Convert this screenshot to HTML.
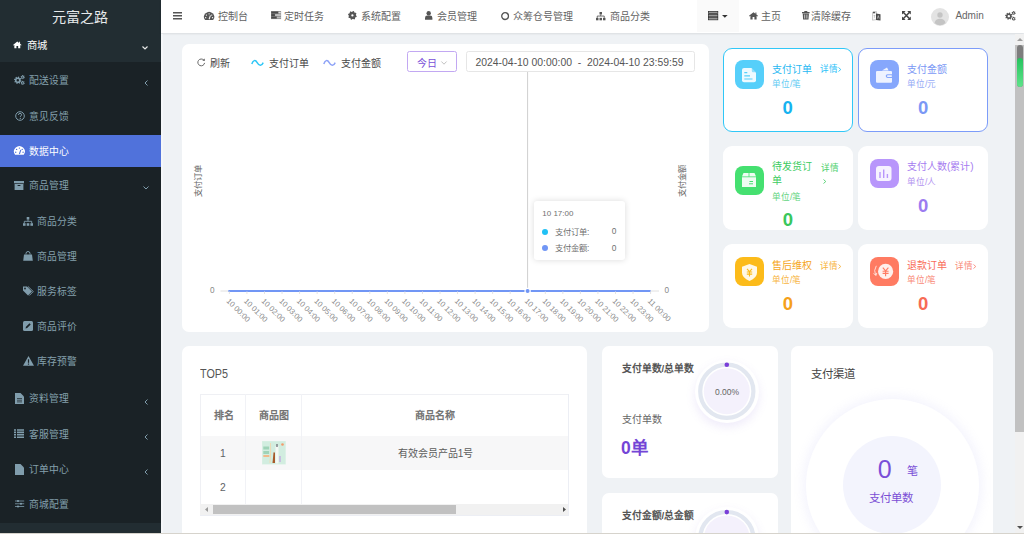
<!DOCTYPE html>
<html lang="zh-CN">
<head>
<meta charset="utf-8">
<style>
*{margin:0;padding:0;box-sizing:border-box}
html,body{width:1024px;height:534px;overflow:hidden;background:#eff2f5;font-family:"Liberation Sans",sans-serif}
.a{position:absolute}
.t{position:absolute;white-space:nowrap}
svg.i{position:absolute;display:block;overflow:visible}
.si{color:#84a0ac;font-size:9.8px;line-height:14px}
.hi{color:#626262;font-size:10px;line-height:14px}
.card{position:absolute;background:#fff;border-radius:7px}
.sc{position:absolute;background:#fff;border-radius:9px}
.ib{position:absolute;width:29px;height:29px;border-radius:8px}
.tt{font-size:10px;line-height:14px}
.un{font-size:8.6px;line-height:10px}
.dt{font-size:8.6px;line-height:10px}
.num{font-size:18.5px;line-height:18px;font-weight:bold}
</style>
</head>
<body>
<!-- SIDEBAR -->
<div class="a" style="left:0;top:0;width:161px;height:534px;background:#1a2226"></div>
<div class="a" style="left:0;top:0;width:161px;height:61.5px;background:#222d32"></div>
<div class="a" style="left:0;top:523px;width:161px;height:11px;background:#222d32"></div>
<div class="t" style="left:51.6px;top:8px;font-size:14.1px;line-height:18px;color:#e6e9eb">元富之路</div>
<svg class="i" style="left:13.2px;top:41px" width="8.6" height="7.6" viewBox="0 0 9 7.4"><path d="M4.5 0.3 L0 3.8 L0.6 4.4 L1.4 3.8 V7.4 H3.6 V5 H5.4 V7.4 H7.6 V3.8 L8.4 4.4 L9 3.8 L7.4 2.5 V0.6 H6.4 V1.7 Z" fill="#fff"/></svg>
<div class="t" style="left:26.8px;top:38.6px;font-size:10.3px;line-height:14px;color:#fff;font-weight:500">商城</div>
<svg class="i" style="left:142.3px;top:45.5px" width="6" height="4" viewBox="0 0 6 4"><path d="M0.5 0.5 L3 3 L5.5 0.5" stroke="#e8e8e8" stroke-width="1.2" fill="none"/></svg>
<div class="a" style="left:0;top:134.5px;width:161px;height:32px;background:#5072db"></div>
<!-- sidebar icons -->
<svg class="i" style="left:14.1px;top:75px" width="10.8" height="10" viewBox="0 0 11.4 10.5"><path d="M7.00 5.50 L7.97 5.97 L7.70 7.03 L6.62 6.97 L6.12 7.62 L6.48 8.64 L5.53 9.20 L4.81 8.39 L4.00 8.50 L3.53 9.47 L2.47 9.20 L2.53 8.12 L1.88 7.62 L0.86 7.98 L0.30 7.03 L1.11 6.31 L1.00 5.50 L0.03 5.03 L0.30 3.97 L1.38 4.03 L1.88 3.38 L1.52 2.36 L2.47 1.80 L3.19 2.61 L4.00 2.50 L4.47 1.53 L5.53 1.80 L5.47 2.88 L6.12 3.38 L7.14 3.02 L7.70 3.97 L6.89 4.69Z M5.30 5.50 A1.3 1.3 0 1 0 2.70 5.50 A1.3 1.3 0 1 0 5.30 5.50Z" fill="#809dac" fill-rule="evenodd"/><path d="M10.80 2.20 L11.37 2.54 L11.11 3.30 L10.44 3.21 L10.00 3.59 L9.99 4.25 L9.20 4.40 L8.95 3.78 L8.40 3.59 L7.82 3.91 L7.29 3.30 L7.71 2.77 L7.60 2.20 L7.03 1.86 L7.29 1.10 L7.96 1.19 L8.40 0.81 L8.41 0.15 L9.20 0.00 L9.45 0.62 L10.00 0.81 L10.58 0.49 L11.11 1.10 L10.69 1.63Z M9.90 2.20 A0.7 0.7 0 1 0 8.50 2.20 A0.7 0.7 0 1 0 9.90 2.20Z" fill="#809dac" fill-rule="evenodd"/><path d="M10.80 8.30 L11.37 8.64 L11.11 9.40 L10.44 9.31 L10.00 9.69 L9.99 10.35 L9.20 10.50 L8.95 9.88 L8.40 9.69 L7.82 10.01 L7.29 9.40 L7.71 8.87 L7.60 8.30 L7.03 7.96 L7.29 7.20 L7.96 7.29 L8.40 6.91 L8.41 6.25 L9.20 6.10 L9.45 6.72 L10.00 6.91 L10.58 6.59 L11.11 7.20 L10.69 7.73Z M9.90 8.30 A0.7 0.7 0 1 0 8.50 8.30 A0.7 0.7 0 1 0 9.90 8.30Z" fill="#809dac" fill-rule="evenodd"/></svg>
<svg class="i" style="left:14.5px;top:111px" width="10" height="10" viewBox="0 0 10 10"><circle cx="5" cy="5" r="4.3" stroke="#809dac" stroke-width="1" fill="none"/><path d="M3.4 3.9 Q3.5 2.4 5 2.4 Q6.6 2.4 6.6 3.8 Q6.6 4.7 5.4 5.2 V6" stroke="#809dac" stroke-width="1" fill="none"/><circle cx="5.3" cy="7.4" r="0.6" fill="#809dac"/></svg>
<svg class="i" style="left:14px;top:146px" width="10.8" height="9" viewBox="0 0 10 8"><path d="M1 8 A5 5 0 1 1 9 8 Z" fill="#fff"/><path d="M5 7.2 L6.3 3.4" stroke="#5072db" stroke-width="1"/><circle cx="5" cy="1.8" r="0.65" fill="#5072db"/><circle cx="2.4" cy="3" r="0.65" fill="#5072db"/><circle cx="7.6" cy="3" r="0.65" fill="#5072db"/><circle cx="1.6" cy="5.6" r="0.65" fill="#5072db"/><circle cx="8.4" cy="5.6" r="0.65" fill="#5072db"/></svg>
<svg class="i" style="left:14px;top:180.5px" width="10" height="9" viewBox="0 0 10 9"><rect x="0" y="0" width="10" height="2.3" fill="#809dac"/><rect x="0.6" y="3" width="8.8" height="6" fill="#809dac"/><rect x="3.6" y="4" width="2.8" height="1" fill="#1a2226"/></svg>
<svg class="i" style="left:22.8px;top:216.5px" width="10" height="9" viewBox="0 0 10 9"><rect x="3.7" y="0" width="2.6" height="2.6" fill="#809dac"/><path d="M5 2.6 V4.3 M1.3 6.2 V4.3 H8.7 V6.2" stroke="#809dac" stroke-width="0.9" fill="none"/><rect x="0" y="6.2" width="2.6" height="2.6" fill="#809dac"/><rect x="3.7" y="6.2" width="2.6" height="2.6" fill="#809dac"/><rect x="7.4" y="6.2" width="2.6" height="2.6" fill="#809dac"/></svg>
<svg class="i" style="left:22.8px;top:250.5px" width="10" height="10" viewBox="0 0 10 10"><path d="M3 3.5 V2.5 Q3 0.5 5 0.5 Q7 0.5 7 2.5 V3.5" stroke="#809dac" stroke-width="1" fill="none"/><path d="M1 3.5 H9 L9.8 9.8 H0.2 Z" fill="#809dac"/></svg>
<svg class="i" style="left:22.8px;top:286px" width="11" height="10" viewBox="0 0 11 10"><path d="M0 0.5 H4 L9 5.5 L5 9.5 L0 4.5 Z" fill="#809dac"/><circle cx="2" cy="2.5" r="0.9" fill="#1a2226"/><path d="M5 0.5 L10.3 5.5 L6.3 9.5" stroke="#809dac" stroke-width="0.9" fill="none"/></svg>
<svg class="i" style="left:23px;top:321px" width="10" height="10" viewBox="0 0 10 10"><rect x="0" y="0" width="10" height="10" rx="1.5" fill="#809dac"/><path d="M2.5 7.5 L3 5.8 L6.5 2.3 L7.7 3.5 L4.2 7 Z" fill="#1a2226"/></svg>
<svg class="i" style="left:22.8px;top:356px" width="11" height="10" viewBox="0 0 11 10"><path d="M5.5 0 L11 9.8 H0 Z" fill="#809dac"/><rect x="4.9" y="3.3" width="1.2" height="3.5" fill="#1a2226"/><rect x="4.9" y="7.5" width="1.2" height="1.2" fill="#1a2226"/></svg>
<svg class="i" style="left:14.5px;top:393px" width="9" height="11" viewBox="0 0 9 11"><path d="M0 0 H5.5 L9 3.5 V11 H0 Z" fill="#809dac"/><path d="M2 5.5 H7 M2 7.2 H7 M2 8.9 H7" stroke="#1a2226" stroke-width="0.7"/></svg>
<svg class="i" style="left:14.3px;top:429px" width="10" height="9" viewBox="0 0 10 9"><path d="M0 1 H2 M0 3.4 H2 M0 5.8 H2 M0 8.2 H2 M3 1 H10 M3 3.4 H10 M3 5.8 H10 M3 8.2 H10" stroke="#809dac" stroke-width="1.6"/></svg>
<svg class="i" style="left:14.5px;top:464px" width="9" height="11" viewBox="0 0 9 11"><path d="M0 0 H5.5 L9 3.5 V11 H0 Z" fill="#809dac"/></svg>
<svg class="i" style="left:14.8px;top:500.3px" width="9.2" height="7.5" viewBox="0 0 9.2 7.5"><path d="M0 1 H9.2 M0 3.75 H9.2 M0 6.5 H9.2" stroke="#809dac" stroke-width="0.8"/><circle cx="3" cy="1" r="1.1" fill="#809dac"/><circle cx="6" cy="3.75" r="1.1" fill="#809dac"/><circle cx="3" cy="6.5" r="1.1" fill="#809dac"/></svg>
<!-- sidebar arrows -->
<svg class="i" style="left:144px;top:80px" width="4" height="6" viewBox="0 0 4 6"><path d="M3.5 0.5 L1 3 L3.5 5.5" stroke="#809dac" stroke-width="1" fill="none"/></svg>
<svg class="i" style="left:143px;top:186px" width="6" height="4" viewBox="0 0 6 4"><path d="M0.5 0.5 L3 3 L5.5 0.5" stroke="#809dac" stroke-width="1" fill="none"/></svg>
<svg class="i" style="left:144px;top:398.5px" width="4" height="6" viewBox="0 0 4 6"><path d="M3.5 0.5 L1 3 L3.5 5.5" stroke="#809dac" stroke-width="1" fill="none"/></svg>
<svg class="i" style="left:144px;top:434px" width="4" height="6" viewBox="0 0 4 6"><path d="M3.5 0.5 L1 3 L3.5 5.5" stroke="#809dac" stroke-width="1" fill="none"/></svg>
<svg class="i" style="left:144px;top:469px" width="4" height="6" viewBox="0 0 4 6"><path d="M3.5 0.5 L1 3 L3.5 5.5" stroke="#809dac" stroke-width="1" fill="none"/></svg>
<div class="t si" style="left:28.5px;top:74.3px">配送设置</div>
<div class="t si" style="left:28.5px;top:109.8px">意见反馈</div>
<div class="t si" style="left:28.5px;top:145.2px;color:#fff">数据中心</div>
<div class="t si" style="left:28.5px;top:179.3px">商品管理</div>
<div class="t si" style="left:37.3px;top:215.2px">商品分类</div>
<div class="t si" style="left:37.3px;top:249.5px">商品管理</div>
<div class="t si" style="left:37.3px;top:284.9px">服务标签</div>
<div class="t si" style="left:37.3px;top:319.8px">商品评价</div>
<div class="t si" style="left:37.3px;top:355.2px">库存预警</div>
<div class="t si" style="left:28.5px;top:392.4px">资料管理</div>
<div class="t si" style="left:28.5px;top:427.9px">客服管理</div>
<div class="t si" style="left:28.5px;top:463px">订单中心</div>
<div class="t si" style="left:28.5px;top:498px">商城配置</div>

<!-- HEADER -->
<div class="a" style="left:161px;top:0;width:863px;height:33px;background:#fff;box-shadow:0 1px 2px rgba(0,0,0,0.09)"></div><div class="a" style="left:161px;top:34px;width:2px;height:499px;background:#f5f7f9"></div>
<div class="a" style="left:697px;top:0;width:42px;height:32px;background:#fafafa"></div>
<svg class="i" style="left:172.5px;top:12px" width="9" height="7.5" viewBox="0 0 9 7.5"><path d="M0 0.8 H9 M0 3.75 H9 M0 6.7 H9" stroke="#555" stroke-width="1.4"/></svg>
<svg class="i" style="left:204.2px;top:11.9px" width="10.2" height="8.1" viewBox="0 0 10 8"><path d="M1 8 A5 5 0 1 1 9 8 Z" fill="#555"/><path d="M5 7.2 L6.3 3.4" stroke="#fff" stroke-width="1"/><circle cx="5" cy="1.8" r="0.65" fill="#fff"/><circle cx="2.4" cy="3" r="0.65" fill="#fff"/><circle cx="7.6" cy="3" r="0.65" fill="#fff"/><circle cx="1.6" cy="5.6" r="0.65" fill="#fff"/><circle cx="8.4" cy="5.6" r="0.65" fill="#fff"/></svg>
<div class="t hi" style="left:217.6px;top:9.7px">控制台</div>
<svg class="i" style="left:270.8px;top:11px" width="10.1" height="8.1" viewBox="0 0 10.1 8.1"><rect x="0" y="0" width="10.1" height="8.1" fill="#888"/><rect x="0.3" y="0.6" width="7" height="1.9" fill="#4a4a4a"/><rect x="0.3" y="3.1" width="3.6" height="1.9" fill="#4a4a4a"/><rect x="0.3" y="5.6" width="5.4" height="1.9" fill="#4a4a4a"/><rect x="7.5" y="0.8" width="2.3" height="1.5" fill="#ddd"/><rect x="4.1" y="3.3" width="5.7" height="1.5" fill="#ccc"/><rect x="5.9" y="5.8" width="3.9" height="1.5" fill="#bbb"/></svg>
<div class="t hi" style="left:284px;top:9.7px">定时任务</div>
<svg class="i" style="left:347.6px;top:11.4px" width="8.8" height="8.8" viewBox="0 0 10 10"><path d="M9.10 5.00 L9.96 5.67 L9.62 6.91 L8.55 7.06 L7.90 7.90 L8.03 8.97 L6.91 9.62 L6.05 8.96 L5.00 9.10 L4.33 9.96 L3.09 9.62 L2.94 8.55 L2.10 7.90 L1.03 8.03 L0.38 6.91 L1.04 6.05 L0.90 5.00 L0.04 4.33 L0.38 3.09 L1.45 2.94 L2.10 2.10 L1.97 1.03 L3.09 0.38 L3.95 1.04 L5.00 0.90 L5.67 0.04 L6.91 0.38 L7.06 1.45 L7.90 2.10 L8.97 1.97 L9.62 3.09 L8.96 3.95Z M6.3 5 A1.3 1.3 0 1 0 3.7 5 A1.3 1.3 0 1 0 6.3 5Z" fill="#555" fill-rule="evenodd"/></svg>
<div class="t hi" style="left:360.7px;top:9.7px">系统配置</div>
<svg class="i" style="left:425px;top:11.2px" width="7.4" height="8.8" viewBox="0 0 7.4 8.8"><circle cx="3.7" cy="2.3" r="2.2" fill="#555"/><path d="M0 8.8 V7 Q0 4.6 2.3 4.6 H5.1 Q7.4 4.6 7.4 7 V8.8 Z" fill="#555"/></svg>
<div class="t hi" style="left:437.2px;top:9.7px">会员管理</div>
<svg class="i" style="left:500.6px;top:11.8px" width="8.2" height="8.2" viewBox="0 0 8.2 8.2"><circle cx="4.1" cy="4.1" r="3.4" stroke="#555" stroke-width="1.3" fill="none"/></svg>
<div class="t hi" style="left:513.2px;top:9.7px">众筹仓号管理</div>
<svg class="i" style="left:595.5px;top:11.8px" width="9.5" height="8.5" viewBox="0 0 10 9"><rect x="3.7" y="0" width="2.6" height="2.6" fill="#555"/><path d="M5 2.6 V4.3 M1.3 6.2 V4.3 H8.7 V6.2" stroke="#555" stroke-width="0.9" fill="none"/><rect x="0" y="6.2" width="2.6" height="2.6" fill="#555"/><rect x="3.7" y="6.2" width="2.6" height="2.6" fill="#555"/><rect x="7.4" y="6.2" width="2.6" height="2.6" fill="#555"/></svg>
<div class="t hi" style="left:609.7px;top:9.7px">商品分类</div>
<svg class="i" style="left:707.8px;top:10.8px" width="10.2" height="9.2" viewBox="0 0 10.2 9.2"><rect x="0.35" y="0.35" width="9.5" height="2.3" fill="#9a9a9a" stroke="#2a2a2a" stroke-width="0.7"/><rect x="0.35" y="3.45" width="9.5" height="2.3" fill="#9a9a9a" stroke="#2a2a2a" stroke-width="0.7"/><rect x="0.35" y="6.55" width="9.5" height="2.3" fill="#9a9a9a" stroke="#2a2a2a" stroke-width="0.7"/></svg>
<svg class="i" style="left:722px;top:15px" width="5.7" height="2.8" viewBox="0 0 5.7 2.8"><path d="M0 0 H5.7 L2.85 2.8 Z" fill="#333"/></svg>
<svg class="i" style="left:749px;top:11.8px" width="9" height="7.4" viewBox="0 0 9 7.4"><path d="M4.5 0.3 L0 3.8 L0.6 4.4 L1.4 3.8 V7.4 H3.6 V5 H5.4 V7.4 H7.6 V3.8 L8.4 4.4 L9 3.8 L7.4 2.5 V0.6 H6.4 V1.7 Z" fill="#555"/></svg>
<div class="t hi" style="left:760.6px;top:9.7px">主页</div>
<svg class="i" style="left:802px;top:11px" width="7.6" height="8.6" viewBox="0 0 7.6 8.6"><rect x="2.3" y="0" width="3" height="1" fill="#555"/><rect x="0" y="1" width="7.6" height="1.3" fill="#555"/><path d="M0.7 2.6 H6.9 L6.5 8.6 H1.1 Z" fill="#555"/><path d="M2.7 3.5 V7.6 M4.9 3.5 V7.6" stroke="#fff" stroke-width="0.7"/></svg>
<div class="t hi" style="left:811.4px;top:9.7px">清除缓存</div>
<svg class="i" style="left:872.3px;top:10.8px" width="9" height="9.8" viewBox="0 0 9 9.8"><path d="M0.5 1.2 L4.5 0.6 V8.6 L0.5 9.2Z" fill="#fafafa" stroke="#aaa" stroke-width="0.6"/><rect x="1" y="0.8" width="2.2" height="1.5" fill="#555"/><path d="M4 2.5 L8.5 3.2 V9.6 L4 8.9Z" fill="#4a4a4a"/><path d="M5.4 7.6 L6.3 4.6 L7.2 7.6" stroke="#ddd" stroke-width="0.6" fill="none"/><path d="M1.6 4.5 H3.3 M2.4 4.5 V6.8" stroke="#999" stroke-width="0.5"/></svg>
<svg class="i" style="left:901.6px;top:10.9px" width="8.8" height="9" viewBox="0 0 8.8 9"><path d="M0 0 H3.6 L0 3.6Z M8.8 0 V3.6 L5.2 0Z M0 9 V5.4 L3.6 9Z M8.8 9 H5.2 L8.8 5.4Z" fill="#444"/><path d="M1 1 L7.8 8 M7.8 1 L1 8" stroke="#444" stroke-width="1.5"/></svg>
<svg class="i" style="left:931px;top:8.1px" width="18" height="18" viewBox="0 0 18 18"><circle cx="9" cy="9" r="9" fill="#e3e3e3"/><circle cx="9" cy="7" r="2.7" fill="#c4c4c4"/><path d="M3.5 15 Q4.5 10.8 9 10.8 Q13.5 10.8 14.5 15 Q12 17.2 9 17.2 Q6 17.2 3.5 15Z" fill="#c4c4c4"/></svg>
<div class="t hi" style="left:955.4px;top:9.3px;color:#666">Admin</div>
<svg class="i" style="left:1004.8px;top:11px" width="10.8" height="9.8" viewBox="0 0 11.4 10.5"><path d="M7.00 5.50 L7.97 5.97 L7.70 7.03 L6.62 6.97 L6.12 7.62 L6.48 8.64 L5.53 9.20 L4.81 8.39 L4.00 8.50 L3.53 9.47 L2.47 9.20 L2.53 8.12 L1.88 7.62 L0.86 7.98 L0.30 7.03 L1.11 6.31 L1.00 5.50 L0.03 5.03 L0.30 3.97 L1.38 4.03 L1.88 3.38 L1.52 2.36 L2.47 1.80 L3.19 2.61 L4.00 2.50 L4.47 1.53 L5.53 1.80 L5.47 2.88 L6.12 3.38 L7.14 3.02 L7.70 3.97 L6.89 4.69Z M5.30 5.50 A1.3 1.3 0 1 0 2.70 5.50 A1.3 1.3 0 1 0 5.30 5.50Z" fill="#555" fill-rule="evenodd"/><path d="M10.80 2.20 L11.37 2.54 L11.11 3.30 L10.44 3.21 L10.00 3.59 L9.99 4.25 L9.20 4.40 L8.95 3.78 L8.40 3.59 L7.82 3.91 L7.29 3.30 L7.71 2.77 L7.60 2.20 L7.03 1.86 L7.29 1.10 L7.96 1.19 L8.40 0.81 L8.41 0.15 L9.20 0.00 L9.45 0.62 L10.00 0.81 L10.58 0.49 L11.11 1.10 L10.69 1.63Z M9.90 2.20 A0.7 0.7 0 1 0 8.50 2.20 A0.7 0.7 0 1 0 9.90 2.20Z" fill="#555" fill-rule="evenodd"/><path d="M10.80 8.30 L11.37 8.64 L11.11 9.40 L10.44 9.31 L10.00 9.69 L9.99 10.35 L9.20 10.50 L8.95 9.88 L8.40 9.69 L7.82 10.01 L7.29 9.40 L7.71 8.87 L7.60 8.30 L7.03 7.96 L7.29 7.20 L7.96 7.29 L8.40 6.91 L8.41 6.25 L9.20 6.10 L9.45 6.72 L10.00 6.91 L10.58 6.59 L11.11 7.20 L10.69 7.73Z M9.90 8.30 A0.7 0.7 0 1 0 8.50 8.30 A0.7 0.7 0 1 0 9.90 8.30Z" fill="#555" fill-rule="evenodd"/></svg>

<!-- CHART CARD -->
<div class="card" style="left:182px;top:44px;width:527px;height:287.5px"></div>
<svg class="i" style="left:197.1px;top:57.8px" width="8.4" height="8.4" viewBox="0 0 8.4 8.4"><path d="M6.9 2.3 A3.4 3.4 0 1 0 7.6 4.9" stroke="#666" stroke-width="1" fill="none"/><path d="M5.3 2.6 L7.9 3.1 L7.7 0.4 Z" fill="#666"/></svg>
<div class="t tt" style="left:209.6px;top:56.5px;color:#484848">刷新</div>
<svg class="i" style="left:250.8px;top:59px" width="13" height="7.5" viewBox="0 0 13 7.5"><path d="M0.8 5 C2 1.2 4.3 0.3 6.2 3.6 C8 6.8 10.6 7.4 12.2 3.6" stroke="#2ec6f6" stroke-width="1.5" fill="none"/></svg>
<div class="t tt" style="left:268.8px;top:56.5px;color:#484848">支付订单</div>
<svg class="i" style="left:322.7px;top:59px" width="13" height="7.5" viewBox="0 0 13 7.5"><path d="M0.8 5 C2 1.2 4.3 0.3 6.2 3.6 C8 6.8 10.6 7.4 12.2 3.6" stroke="#8ea3f7" stroke-width="1.5" fill="none"/></svg>
<div class="t tt" style="left:340.8px;top:56.5px;color:#484848">支付金额</div>
<div class="a" style="left:407.2px;top:51.1px;width:49.4px;height:21px;border:1px solid #c2a8f2;border-radius:2.5px"></div>
<div class="t tt" style="left:416.8px;top:57.1px;color:#7a4fd8">今日</div>
<svg class="i" style="left:441px;top:61px" width="6" height="4" viewBox="0 0 6 4"><path d="M0.4 0.5 L3 3.2 L5.6 0.5" stroke="#bbb" stroke-width="0.9" fill="none"/></svg>
<div class="a" style="left:466.4px;top:51.3px;width:228.6px;height:20.8px;border:1px solid #e6e6e6;border-radius:2.5px"></div>
<div class="t" style="left:475.5px;top:55.9px;font-size:10.4px;line-height:14px;color:#555;word-spacing:0">2024-04-10 00:00:00&nbsp; - &nbsp;2024-04-10 23:59:59</div>

<svg class="i" style="left:0;top:0" width="1024" height="534" viewBox="0 0 1024 534">
<line x1="527.6" y1="72" x2="527.6" y2="291" stroke="#cfcfcf" stroke-width="1"/>
<line x1="220.5" y1="291" x2="659" y2="291" stroke="#e0e0e0" stroke-width="1"/>
<line x1="228.4" y1="291" x2="650.6" y2="291" stroke="#7196f5" stroke-width="2"/>
<line x1="229.40" y1="291.5" x2="229.40" y2="294" stroke="#e3e3e3" stroke-width="1"/>
<line x1="246.95" y1="291.5" x2="246.95" y2="294" stroke="#e3e3e3" stroke-width="1"/>
<line x1="264.50" y1="291.5" x2="264.50" y2="294" stroke="#e3e3e3" stroke-width="1"/>
<line x1="282.05" y1="291.5" x2="282.05" y2="294" stroke="#e3e3e3" stroke-width="1"/>
<line x1="299.60" y1="291.5" x2="299.60" y2="294" stroke="#e3e3e3" stroke-width="1"/>
<line x1="317.15" y1="291.5" x2="317.15" y2="294" stroke="#e3e3e3" stroke-width="1"/>
<line x1="334.70" y1="291.5" x2="334.70" y2="294" stroke="#e3e3e3" stroke-width="1"/>
<line x1="352.25" y1="291.5" x2="352.25" y2="294" stroke="#e3e3e3" stroke-width="1"/>
<line x1="369.80" y1="291.5" x2="369.80" y2="294" stroke="#e3e3e3" stroke-width="1"/>
<line x1="387.35" y1="291.5" x2="387.35" y2="294" stroke="#e3e3e3" stroke-width="1"/>
<line x1="404.90" y1="291.5" x2="404.90" y2="294" stroke="#e3e3e3" stroke-width="1"/>
<line x1="422.45" y1="291.5" x2="422.45" y2="294" stroke="#e3e3e3" stroke-width="1"/>
<line x1="440.00" y1="291.5" x2="440.00" y2="294" stroke="#e3e3e3" stroke-width="1"/>
<line x1="457.55" y1="291.5" x2="457.55" y2="294" stroke="#e3e3e3" stroke-width="1"/>
<line x1="475.10" y1="291.5" x2="475.10" y2="294" stroke="#e3e3e3" stroke-width="1"/>
<line x1="492.65" y1="291.5" x2="492.65" y2="294" stroke="#e3e3e3" stroke-width="1"/>
<line x1="510.20" y1="291.5" x2="510.20" y2="294" stroke="#e3e3e3" stroke-width="1"/>
<line x1="527.75" y1="291.5" x2="527.75" y2="294" stroke="#e3e3e3" stroke-width="1"/>
<line x1="545.30" y1="291.5" x2="545.30" y2="294" stroke="#e3e3e3" stroke-width="1"/>
<line x1="562.85" y1="291.5" x2="562.85" y2="294" stroke="#e3e3e3" stroke-width="1"/>
<line x1="580.40" y1="291.5" x2="580.40" y2="294" stroke="#e3e3e3" stroke-width="1"/>
<line x1="597.95" y1="291.5" x2="597.95" y2="294" stroke="#e3e3e3" stroke-width="1"/>
<line x1="615.50" y1="291.5" x2="615.50" y2="294" stroke="#e3e3e3" stroke-width="1"/>
<line x1="633.05" y1="291.5" x2="633.05" y2="294" stroke="#e3e3e3" stroke-width="1"/>
<line x1="650.60" y1="291.5" x2="650.60" y2="294" stroke="#e3e3e3" stroke-width="1"/>
<g font-family="Liberation Sans" font-size="7.6" fill="#8a8a8a"><text x="226.00" y="301.50" transform="rotate(45 226.00 301.50)">10 00:00</text>
<text x="243.55" y="301.50" transform="rotate(45 243.55 301.50)">10 01:00</text>
<text x="261.10" y="301.50" transform="rotate(45 261.10 301.50)">10 02:00</text>
<text x="278.65" y="301.50" transform="rotate(45 278.65 301.50)">10 03:00</text>
<text x="296.20" y="301.50" transform="rotate(45 296.20 301.50)">10 04:00</text>
<text x="313.75" y="301.50" transform="rotate(45 313.75 301.50)">10 05:00</text>
<text x="331.30" y="301.50" transform="rotate(45 331.30 301.50)">10 06:00</text>
<text x="348.85" y="301.50" transform="rotate(45 348.85 301.50)">10 07:00</text>
<text x="366.40" y="301.50" transform="rotate(45 366.40 301.50)">10 08:00</text>
<text x="383.95" y="301.50" transform="rotate(45 383.95 301.50)">10 09:00</text>
<text x="401.50" y="301.50" transform="rotate(45 401.50 301.50)">10 10:00</text>
<text x="419.05" y="301.50" transform="rotate(45 419.05 301.50)">10 11:00</text>
<text x="436.60" y="301.50" transform="rotate(45 436.60 301.50)">10 12:00</text>
<text x="454.15" y="301.50" transform="rotate(45 454.15 301.50)">10 13:00</text>
<text x="471.70" y="301.50" transform="rotate(45 471.70 301.50)">10 14:00</text>
<text x="489.25" y="301.50" transform="rotate(45 489.25 301.50)">10 15:00</text>
<text x="506.80" y="301.50" transform="rotate(45 506.80 301.50)">10 16:00</text>
<text x="524.35" y="301.50" transform="rotate(45 524.35 301.50)">10 17:00</text>
<text x="541.90" y="301.50" transform="rotate(45 541.90 301.50)">10 18:00</text>
<text x="559.45" y="301.50" transform="rotate(45 559.45 301.50)">10 19:00</text>
<text x="577.00" y="301.50" transform="rotate(45 577.00 301.50)">10 20:00</text>
<text x="594.55" y="301.50" transform="rotate(45 594.55 301.50)">10 21:00</text>
<text x="612.10" y="301.50" transform="rotate(45 612.10 301.50)">10 22:00</text>
<text x="629.65" y="301.50" transform="rotate(45 629.65 301.50)">10 23:00</text>
<text x="647.20" y="301.50" transform="rotate(45 647.20 301.50)">11 00:00</text></g>
<circle cx="527.6" cy="291" r="2.6" fill="#7196f5" stroke="#fff" stroke-width="1.2"/>
<text x="210" y="292.7" font-family="Liberation Sans" font-size="8.2" fill="#888">0</text>
<text x="664.5" y="292.7" font-family="Liberation Sans" font-size="8.2" fill="#888">0</text>
</svg>
<div class="t" style="left:180.7px;top:176.3px;width:34px;height:10px;font-size:8.3px;line-height:10px;color:#666;transform:rotate(-90deg);text-align:center">支付订单</div>
<div class="t" style="left:664.9px;top:176.3px;width:34px;height:10px;font-size:8.3px;line-height:10px;color:#666;transform:rotate(-90deg);text-align:center">支付金额</div>
<!-- tooltip -->
<div class="a" style="left:533.5px;top:201.2px;width:91px;height:58.4px;background:#fff;border-radius:3px;box-shadow:0 0 6px rgba(0,0,0,0.15)"></div>
<div class="t" style="left:542.3px;top:209px;font-size:8px;line-height:10px;color:#707070">10 17:00</div>
<div class="a" style="left:541.6px;top:228.6px;width:6px;height:6px;border-radius:50%;background:#21c1f5"></div>
<div class="t" style="left:554.9px;top:226.5px;font-size:8.3px;line-height:10px;color:#707070">支付订单:</div>
<div class="t" style="left:611.7px;top:226.3px;font-size:8.4px;line-height:10px;color:#707070">0</div>
<div class="a" style="left:541.6px;top:245.3px;width:6px;height:6px;border-radius:50%;background:#7196f5"></div>
<div class="t" style="left:554.9px;top:243.4px;font-size:8.3px;line-height:10px;color:#707070">支付金额:</div>
<div class="t" style="left:611.7px;top:243.2px;font-size:8.4px;line-height:10px;color:#707070">0</div>

<!-- SMALL CARDS -->
<div class="sc" style="left:723.3px;top:48px;width:129.5px;height:83.5px;border:1.7px solid #30c7f7"></div>
<div class="sc" style="left:858.3px;top:48px;width:129.5px;height:83.5px;border:1.7px solid #7c9cf9"></div>
<div class="sc" style="left:723.3px;top:146px;width:129.5px;height:84px"></div>
<div class="sc" style="left:858.3px;top:146px;width:129.5px;height:84px"></div>
<div class="sc" style="left:723.3px;top:244px;width:129.5px;height:84px"></div>
<div class="sc" style="left:858.3px;top:244px;width:129.5px;height:84px"></div>

<!-- card1 -->
<div class="ib" style="left:734.5px;top:60.3px;background:#56cffa"></div>
<svg class="i" style="left:742px;top:67.7px" width="14" height="14.3" viewBox="0 0 14 14.3"><path d="M2 0 H9.5 L14 4.5 V12.3 Q14 14.3 12 14.3 H2 Q0 14.3 0 12.3 V2 Q0 0 2 0Z" fill="#eefaff"/><path d="M9.8 0 L14 4.2 H11 Q9.8 4.2 9.8 3 Z" fill="#56cffa" opacity="0.6"/><path d="M2.3 4.7 H5.3 M2.3 7.8 H8 M2.3 11 H10.5" stroke="#56cffa" stroke-width="1.2"/></svg>
<div class="t tt" style="left:771.7px;top:63.2px;color:#1fb8f2">支付订单</div>
<div class="t dt" style="left:820.3px;top:63.6px;color:#2cc2f9">详情</div><svg class="i" style="left:838.4px;top:66.6px" width="3.4" height="5" viewBox="0 0 3.4 5"><path d="M0.5 0.5 L2.8 2.5 L0.5 4.5" stroke="#2cc2f9" stroke-width="0.9" fill="none"/></svg>
<div class="t un" style="left:772px;top:78.6px;color:#5fcbf3">单位/笔</div>
<div class="t num" style="left:782.5px;top:98.8px;color:#17b3f0">0</div>
<!-- card2 -->
<div class="ib" style="left:869.5px;top:60.3px;background:#86a7fc"></div>
<svg class="i" style="left:876px;top:67px" width="16" height="15.7" viewBox="0 0 16 15.7"><path d="M6 3.6 L11 0.6 L12.6 3.6 Z" fill="#eef3ff"/><path d="M1 4 H15 Q16 4 16 5 V7.3 H11.5 Q9.7 7.3 9.7 9.1 Q9.7 10.9 11.5 10.9 H16 V14.7 Q16 15.7 15 15.7 H1 Q0 15.7 0 14.7 V5 Q0 4 1 4Z" fill="#eef3ff"/><rect x="11" y="8.3" width="5" height="1.7" rx="0.8" fill="#eef3ff"/></svg>
<div class="t tt" style="left:907px;top:63.2px;color:#7b98f5">支付金额</div>
<div class="t un" style="left:907px;top:78.6px;color:#95aaf6">单位/元</div>
<div class="t num" style="left:918px;top:98.8px;color:#7b98f5">0</div>
<!-- card3 -->
<div class="ib" style="left:734.5px;top:165.6px;background:#45e070"></div>
<svg class="i" style="left:742px;top:173.3px" width="14" height="14" viewBox="0 0 14 14"><path d="M1.5 0 H12.5 L14 3.5 V14 H0 V3.5 Z" fill="#effcf2"/><path d="M0 3.8 H14" stroke="#45e070" stroke-width="0.8"/><path d="M7 0 V3.8" stroke="#45e070" stroke-width="0.8"/><path d="M7.5 8.5 H11 M7 10.8 H11" stroke="#45e070" stroke-width="1"/></svg>
<div class="t tt" style="left:771.7px;top:160.3px;color:#3ccc5f">待发货订</div>
<div class="t tt" style="left:771.7px;top:174px;color:#3ccc5f">单</div>
<div class="t dt" style="left:820.6px;top:162.5px;color:#4cd06d">详情</div>
<svg class="i" style="left:822.5px;top:178.8px" width="3.4" height="5" viewBox="0 0 3.4 5"><path d="M0.5 0.5 L2.8 2.5 L0.5 4.5" stroke="#4cd06d" stroke-width="0.9" fill="none"/></svg>
<div class="t un" style="left:772px;top:191.8px;color:#63d47f">单位/笔</div>
<div class="t num" style="left:782.8px;top:210.8px;color:#39c75c">0</div>
<!-- card4 -->
<div class="ib" style="left:869.5px;top:158.6px;background:#b896fb"></div>
<svg class="i" style="left:876px;top:165.6px" width="15.5" height="15" viewBox="0 0 15.5 15"><rect x="0" y="0" width="15.5" height="15" rx="3" fill="#f7f3ff"/><path d="M4 6 V12 M7.7 3.5 V12 M11.4 8 V12" stroke="#b896fb" stroke-width="1.4"/></svg>
<div class="t tt" style="left:907px;top:160.3px;color:#a57cf0">支付人数(累计)</div>
<div class="t un" style="left:907px;top:176.6px;color:#b394f0">单位/人</div>
<div class="t num" style="left:918px;top:196.8px;color:#9c7cf0">0</div>
<!-- card5 -->
<div class="ib" style="left:734.5px;top:256.7px;background:#fcbb1a"></div>
<svg class="i" style="left:741.5px;top:263.5px" width="15" height="17" viewBox="0 0 15 17"><path d="M7.5 0 L15 2.8 V8.8 Q15 13.8 7.5 17 Q0 13.8 0 8.8 V2.8 Z" fill="#fff8e6"/><path d="M5 4.8 L7.5 7.6 L10 4.8 M4.8 8 H10.2 M4.8 10.1 H10.2 M7.5 7.6 V12.6" stroke="#fcbb1a" stroke-width="1.1" fill="none"/></svg>
<div class="t tt" style="left:771.7px;top:258.7px;color:#f5a623">售后维权</div>
<div class="t dt" style="left:820.3px;top:260.5px;color:#f7b43d">详情</div><svg class="i" style="left:838.4px;top:263.5px" width="3.4" height="5" viewBox="0 0 3.4 5"><path d="M0.5 0.5 L2.8 2.5 L0.5 4.5" stroke="#f7b43d" stroke-width="0.9" fill="none"/></svg>
<div class="t un" style="left:772px;top:275.1px;color:#f7b543">单位/笔</div>
<div class="t num" style="left:782.8px;top:294.8px;color:#f5a11b">0</div>
<!-- card6 -->
<div class="ib" style="left:869.5px;top:256.7px;background:#ff7b62"></div>
<svg class="i" style="left:871px;top:262px" width="24" height="20" viewBox="0 0 24 20"><circle cx="14.6" cy="9.4" r="7.6" fill="#fff0ec"/><path d="M11.8 5.6 L14.6 8.8 L17.4 5.6 M11.6 9.2 H17.6 M11.6 11.4 H17.6 M14.6 8.8 V14.3" stroke="#ff7b62" stroke-width="1.1" fill="none"/><path d="M5.3 3.8 Q2.4 8.5 4.6 13" stroke="#ffe6e0" stroke-width="0.9" fill="none"/><path d="M2.6 11.3 L4.9 13.6 L5.8 10.9" stroke="#ffe6e0" stroke-width="0.9" fill="none"/></svg>
<div class="t tt" style="left:907px;top:258.7px;color:#f96d5a">退款订单</div>
<div class="t dt" style="left:955.3px;top:260.5px;color:#f98a78">详情</div><svg class="i" style="left:973.4px;top:263.5px" width="3.4" height="5" viewBox="0 0 3.4 5"><path d="M0.5 0.5 L2.8 2.5 L0.5 4.5" stroke="#f98a78" stroke-width="0.9" fill="none"/></svg>
<div class="t un" style="left:907px;top:275.1px;color:#f98a78">单位/笔</div>
<div class="t num" style="left:918px;top:294.8px;color:#f76b55">0</div>

<!-- BOTTOM: TOP5 -->
<div class="card" style="left:182px;top:346px;width:405px;height:200px"></div>
<div class="t" style="left:200.2px;top:366.6px;font-size:12.3px;line-height:14px;color:#555;transform:scaleX(0.875);transform-origin:0 0">TOP5</div>
<div class="a" style="left:200.4px;top:393.5px;width:368px;height:110px;border:1px solid #eff0f4;border-bottom:none;border-right:none"></div>
<div class="a" style="left:201px;top:436px;width:367px;height:34.3px;background:#f7f7f8"></div>


<div class="a" style="left:245.3px;top:394px;width:1px;height:110px;background:#f1f2f6"></div>
<div class="a" style="left:301.3px;top:394px;width:1px;height:110px;background:#f1f2f6"></div>
<div class="t" style="left:213.5px;top:409px;font-size:10px;line-height:14px;color:#737373;font-weight:bold">排名</div>
<div class="t" style="left:258.8px;top:409px;font-size:10px;line-height:14px;color:#737373;font-weight:bold">商品图</div>
<div class="t" style="left:415.4px;top:409px;font-size:10px;line-height:14px;color:#737373;font-weight:bold">商品名称</div>
<div class="t" style="left:220px;top:447px;font-size:10.3px;line-height:14px;color:#606266">1</div>
<svg class="i" style="left:261.8px;top:440.8px" width="23.8" height="23.5" viewBox="0 0 23.8 23.5"><rect x="0" y="0" width="23.8" height="23.5" fill="#dcf1e6"/><rect x="0.5" y="0.5" width="22.8" height="22.5" fill="#d2ede0"/><rect x="1.3" y="5.5" width="5.8" height="3" fill="#9fd3b8"/><rect x="1.3" y="10" width="5.8" height="3" fill="#9fd3b8"/><rect x="1.3" y="14" width="6" height="2" fill="#f0b98a"/><path d="M11.5 11.5 Q12.5 11 13 12 V22 H10.5 Z" fill="#a85a2a"/><rect x="13.5" y="5" width="3" height="17.5" fill="#f5f8f4"/><rect x="14.3" y="3" width="1.4" height="3" fill="#7a7a80"/><rect x="17" y="15" width="2" height="6" fill="#c8c0e0"/><circle cx="20.5" cy="3.5" r="1.3" fill="#f49b6c"/><path d="M8.5 2 Q9 12 8 22" stroke="#f5d5a8" stroke-width="0.8" fill="none"/></svg>
<div class="t" style="left:397.7px;top:447.2px;font-size:10px;line-height:14px;color:#5c5c5c">有效会员产品1号</div>
<div class="t" style="left:220px;top:480.5px;font-size:10.3px;line-height:14px;color:#606266">2</div>
<div class="a" style="left:200.4px;top:503.5px;width:368px;height:11px;background:#f1f1f1"></div><div class="a" style="left:568px;top:393.5px;width:1px;height:121.5px;background:#eceef4"></div><div class="a" style="left:200.4px;top:514.5px;width:368.6px;height:1px;background:#eceef4"></div>
<div class="a" style="left:213px;top:504.5px;width:243px;height:9.5px;background:#c1c1c1"></div>
<svg class="i" style="left:205px;top:506.5px" width="3" height="5" viewBox="0 0 3 5"><path d="M3 0 V5 L0 2.5Z" fill="#9a9a9a"/></svg>
<svg class="i" style="left:562.5px;top:506.5px" width="3" height="5" viewBox="0 0 3 5"><path d="M0 0 V5 L3 2.5Z" fill="#505050"/></svg>

<!-- BOTTOM: ring card 1 -->
<div class="card" style="left:602px;top:346.4px;width:176px;height:132px"></div>
<div class="t" style="left:621.5px;top:361.5px;font-size:9.75px;line-height:14px;color:#555;font-weight:bold">支付单数/总单数</div>
<div class="a" style="left:695px;top:359.5px;width:63.6px;height:63.6px;border-radius:50%;box-shadow:0 4px 10px rgba(150,120,220,0.15)"></div>
<svg class="i" style="left:0;top:0" width="1024" height="534"><circle cx="726.8" cy="391.3" r="26.6" stroke="#e2e7f0" stroke-width="4.2" fill="#fff"/><circle cx="726.8" cy="391.3" r="23" fill="#f4f1fc"/><circle cx="726.8" cy="364.8" r="2.3" fill="#7a3fd8"/></svg>
<div class="t" style="left:715px;top:386.5px;font-size:8.5px;line-height:10px;color:#666">0.00%</div>
<div class="t" style="left:621.5px;top:412.5px;font-size:10px;line-height:14px;color:#666">支付单数</div>
<div class="t" style="left:621px;top:437.5px;font-size:17.5px;line-height:20px;color:#7445d6;font-weight:bold">0单</div>
<!-- ring card 2 -->
<div class="card" style="left:602px;top:493px;width:176px;height:100px"></div>
<div class="t" style="left:621.5px;top:508.5px;font-size:9.75px;line-height:14px;color:#555;font-weight:bold">支付金额/总金额</div>
<div class="a" style="left:695px;top:506.8px;width:63.6px;height:63.6px;border-radius:50%;box-shadow:0 4px 10px rgba(150,120,220,0.15)"></div>
<svg class="i" style="left:0;top:0" width="1024" height="534"><circle cx="726.8" cy="538.6" r="26.6" stroke="#e2e7f0" stroke-width="4.2" fill="#fff"/><circle cx="726.8" cy="538.6" r="23" fill="#f4f1fc"/><circle cx="726.8" cy="512.1" r="2.3" fill="#7a3fd8"/></svg>

<!-- BOTTOM: 支付渠道 -->
<div class="card" style="left:790.5px;top:346.4px;width:202.2px;height:200px"></div>
<div class="t" style="left:811.3px;top:367px;font-size:11.4px;line-height:14px;color:#444">支付渠道</div>
<div class="a" style="left:805.6px;top:399.4px;width:173px;height:173px;border-radius:50%;background:#fff;box-shadow:0 0 10px 4px rgba(170,175,240,0.12)"></div>
<div class="a" style="left:843px;top:436.4px;width:98px;height:98px;border-radius:50%;background:#f3f4fd"></div>
<div class="t" style="left:877.8px;top:455.2px;font-size:25px;line-height:28px;color:#7a4fd8">0</div>
<div class="t" style="left:906.7px;top:463.5px;font-size:11px;line-height:14px;color:#7a4fd8">笔</div>
<div class="t" style="left:869.3px;top:491px;font-size:11.4px;line-height:14px;color:#7b4fd5">支付单数</div>

<!-- SCROLLBAR -->
<div class="a" style="left:1015px;top:34px;width:9px;height:500px;background:#f1f1f1"></div>
<div class="a" style="left:1015px;top:44.5px;width:9px;height:387.5px;background:#c1c1c1"></div>
<div class="a" style="left:1016.5px;top:44.5px;width:6px;height:42px;border-radius:3px;background:#7d7d7d"></div>
<div class="a" style="left:1016.5px;top:57.5px;width:6px;height:29px;border-radius:3px;background:linear-gradient(#25c35e,#5fe38a)"></div>
<svg class="i" style="left:1016.5px;top:38px" width="6" height="3" viewBox="0 0 6 3"><path d="M0 3 L3 0 L6 3Z" fill="#a0a0a0"/></svg>
<svg class="i" style="left:1016.5px;top:526px" width="6" height="3" viewBox="0 0 6 3"><path d="M0 0 L3 3 L6 0Z" fill="#505050"/></svg>
<div class="a" style="left:0;top:533px;width:1024px;height:1px;background:#d6d3cc"></div>
</body>
</html>
